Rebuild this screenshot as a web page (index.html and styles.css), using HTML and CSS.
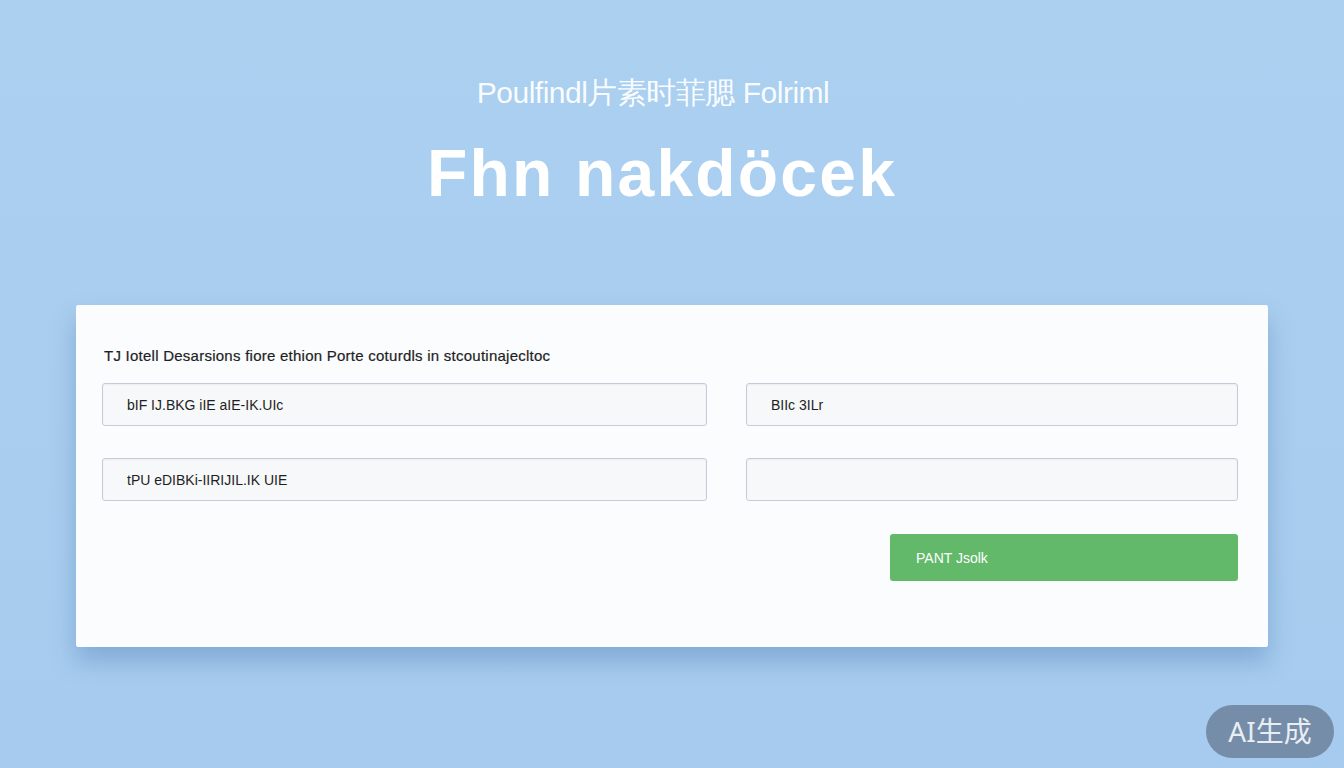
FILE: index.html
```html
<!DOCTYPE html>
<html lang="en">
<head>
  <meta charset="UTF-8" />
  <meta name="viewport" content="width=device-width, initial-scale=1.0"/>
  <title>Fhn nakdöcek</title>
  <link rel="stylesheet" href="styles.css">
</head>
<body>
  <header class="hero">
    <p class="subtitle">Poulfindl片素时菲腮 Folriml</p>
    <h1 class="title">Fhn nakdöcek</h1>
  </header>

  <main class="card">
    <label class="form-label" for="field-one">TJ Iotell Desarsions fiore ethion Porte coturdls in stcoutinajecltoc</label>
    <div class="form-grid">
      <input type="text" class="field" id="field-one" value="bIF IJ.BKG iIE aIE-IK.UIc">
      <input type="text" class="field" value="BIIc 3ILr">
      <input type="text" class="field" value="tPU eDIBKi-IIRIJIL.IK UIE">
      <input type="text" class="field" value="">
      <div class="actions">
        <button class="submit-btn">PANT Jsolk</button>
      </div>
    </div>
  </main>

  <div class="ai-badge">AI生成</div>
</body>
</html>
```

FILE: styles.css
```css
html, body {
  height: 100%;
}
body {
  margin: 0;
  font-family: "Liberation Sans", Arial, sans-serif;
  background: linear-gradient(180deg, #abd0f0 0%, #a9cdef 60%, #a6cbee 100%);
  color: #222;
  overflow: hidden;
}
.hero {
  text-align: center;
  padding: 76px 20px 0 0;
  color: #fff;
}
.subtitle {
  margin: 0;
  padding-right: 18px;
  font-size: 30px;
  line-height: 34px;
  font-weight: 300;
  letter-spacing: -0.5px;
  color: rgba(255, 255, 255, 0.95);
}
.title {
  margin: 28px 0 0;
  font-family: "Liberation Sans", Arial, sans-serif;
  font-size: 66px;
  line-height: 70px;
  font-weight: bold;
  letter-spacing: 2.2px;
}
.card {
  margin: 97px 0 0 76px;
  width: 1192px;
  box-sizing: border-box;
  padding: 43px 30px 66px 26px;
  background: #fbfcfe;
  border-radius: 2px;
  box-shadow: 0 14px 24px rgba(60, 110, 170, 0.35);
}
.form-label {
  display: block;
  font-size: 15px;
  line-height: 16px;
  color: #1d1f24;
  margin: 0 0 19px 2px;
  letter-spacing: 0.25px;
  -webkit-text-stroke: 0.2px #1d1f24;
}
.form-grid {
  display: grid;
  grid-template-columns: 605px 492px;
  column-gap: 39px;
  row-gap: 32px;
}
.field {
  height: 43px;
  box-sizing: border-box;
  padding: 0 24px;
  font-family: "Liberation Sans", Arial, sans-serif;
  font-size: 14px;
  color: #1d1f24;
  background: #f7f8f9;
  border: 1px solid #c6ccd6;
  border-radius: 3px;
  box-shadow: inset 0 1px 2px rgba(0, 0, 0, 0.05);
  outline: none;
}
.actions {
  grid-column: 2;
  display: flex;
  justify-content: flex-end;
  margin-top: 1px;
}
.submit-btn {
  width: 348px;
  height: 47px;
  text-align: left;
  padding: 0 26px;
  font-family: "Liberation Sans", Arial, sans-serif;
  font-size: 14px;
  color: #fff;
  background: #62b96a;
  border: none;
  border-radius: 3px;
  cursor: pointer;
}
.submit-btn:hover {
  background: #56ad5e;
}
.ai-badge {
  position: absolute;
  right: 10px;
  bottom: 10px;
  width: 128px;
  height: 53px;
  line-height: 53px;
  text-align: center;
  border-radius: 27px;
  background: rgba(100, 120, 145, 0.75);
  color: #e9eef3;
  font-family: "Noto Sans", "Noto Sans CJK SC", sans-serif;
  font-size: 28px;
}
```
